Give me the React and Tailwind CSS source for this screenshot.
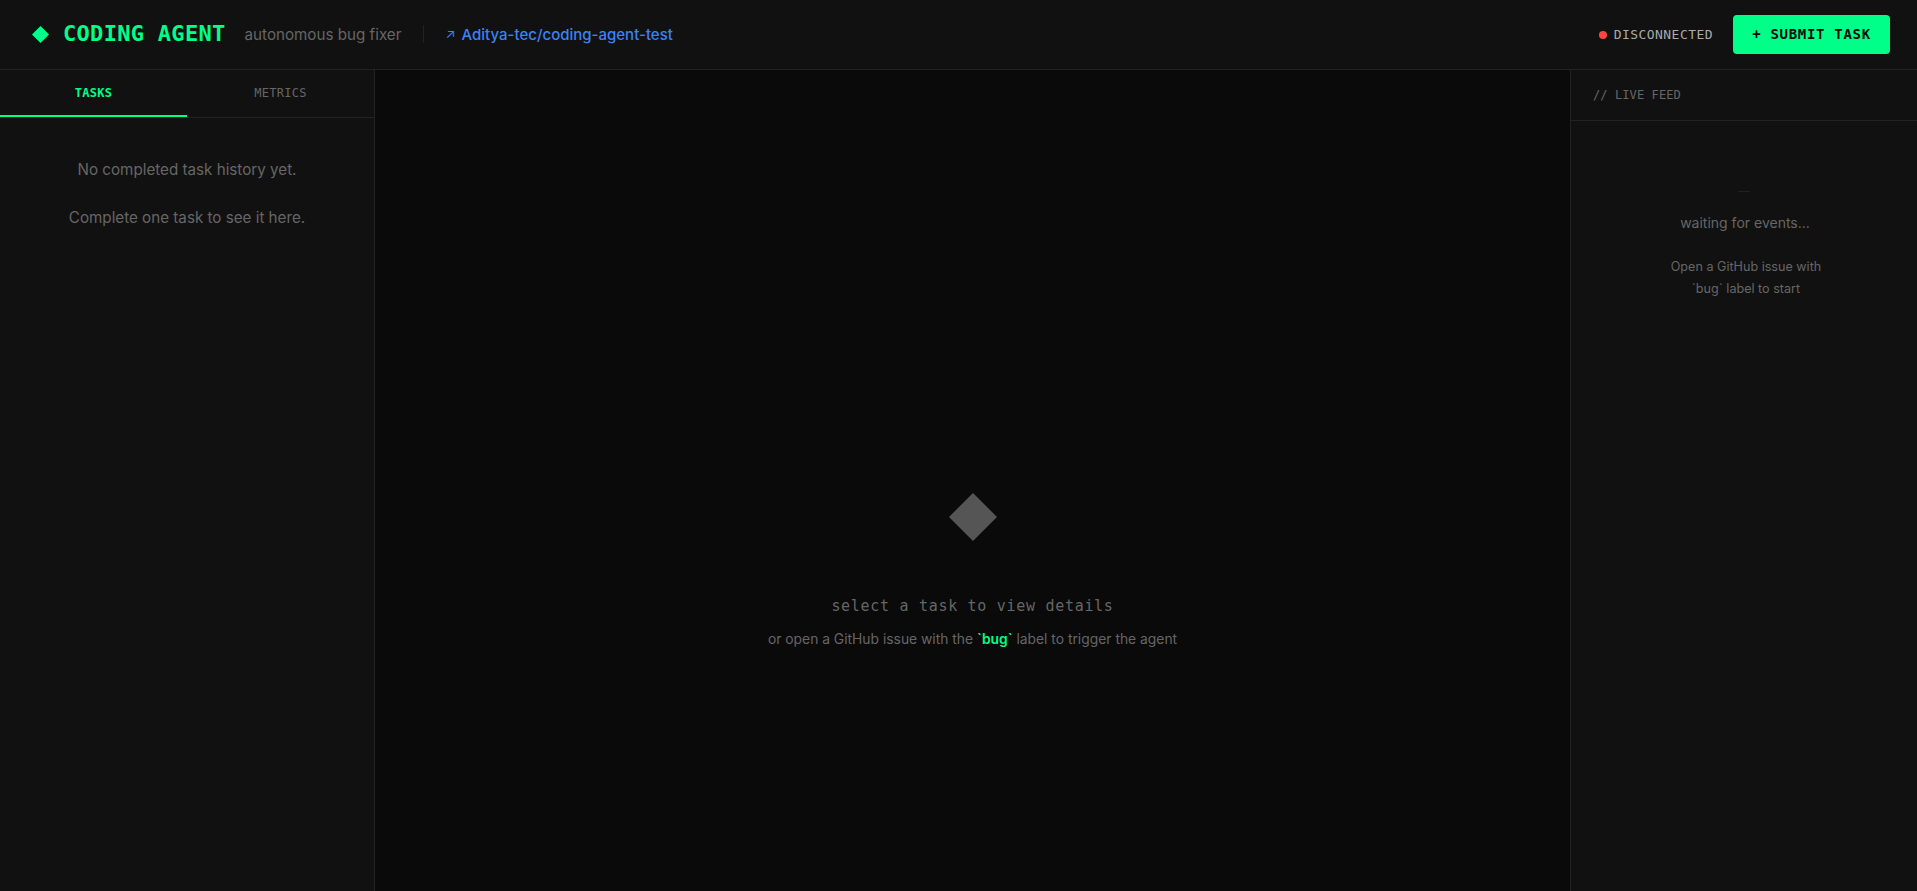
export default function App() {
  return (
    <div className="flex h-[891px] w-full flex-col overflow-hidden bg-[#0a0a0a] font-['Inter',sans-serif] text-[#666]">
      <header className="flex h-[70px] shrink-0 items-center justify-between border-b border-[#222] bg-[#111] pl-8 pr-[27px]">
        <div className="flex items-center">
          <svg width="17" height="17" viewBox="0 0 17 17" className="mr-[14px]"><path d="M8.5 0L17 8.5L8.5 17L0 8.5Z" fill="#00ff88" /></svg>
          <span className="font-['DejaVu_Sans_Mono',monospace] text-[22px] font-bold leading-none tracking-[0.3px] text-[#00ff88]">CODING AGENT</span>
          <span className="ml-[19px] pt-px text-[15.2px] text-[#666]">autonomous bug fixer</span>
          <span className="ml-[22px] h-[18px] w-px bg-[#222]" />
          <span className="ml-[21px] flex items-center pt-px text-[15px] font-medium text-[#3b82f6]"><span className="mr-[6px] text-[13px] font-normal">↗</span>Aditya-tec/coding-agent-test</span>
        </div>
        <div className="flex items-center">
          <span className="h-2 w-2 rounded-full bg-[#ff4444]" />
          <span className="ml-[7px] font-['DejaVu_Sans_Mono',monospace] text-[13px] font-medium tracking-[0.45px] text-[#aaa]">DISCONNECTED</span>
          <button className="ml-5 flex h-[39px] w-[157px] items-center justify-center rounded-[4px] bg-[#00ff88] font-['DejaVu_Sans_Mono',monospace] text-[14px] font-bold tracking-[0.7px] text-[#0a0a0a]">+ SUBMIT TASK</button>
        </div>
      </header>
      <div className="flex min-h-0 flex-1">
        <aside className="flex w-[375px] shrink-0 flex-col border-r border-[#222] bg-[#111]">
          <div className="flex h-[48px] border-b border-[#222]">
            <div className="flex flex-1 items-center justify-center border-b-2 border-[#00ff88] font-['DejaVu_Sans_Mono',monospace] text-[12px] font-bold tracking-[0.3px] text-[#00ff88]">TASKS</div>
            <div className="flex flex-1 items-center justify-center pb-[2px] font-['DejaVu_Sans_Mono',monospace] text-[12px] tracking-[0.3px] text-[#666]">METRICS</div>
          </div>
          <div className="pt-[40px] text-center text-[15.2px] leading-[24px] text-[#666]">
            <p>No completed task history yet.</p>
            <p className="mt-6">Complete one task to see it here.</p>
          </div>
        </aside>
        <main className="flex min-w-0 flex-1 flex-col items-center bg-[#0a0a0a] pt-[423px]">
          <svg width="48" height="48" viewBox="0 0 48 48"><path d="M24 0L48 24L24 48L0 24Z" fill="#555" /></svg>
          <p className="mt-[54px] font-['DejaVu_Sans_Mono',monospace] text-[15px] tracking-[0.7px] text-[#666]">select a task to view details</p>
          <p className="mt-[11px] text-[13.85px] text-[#666]">or open a GitHub issue with the <span className="font-semibold text-[#00ff88]">`bug`</span> label to trigger the agent</p>
        </main>
        <aside className="flex w-[347px] shrink-0 flex-col border-l border-[#222] bg-[#111]">
          <div className="flex h-[51px] items-center border-b border-[#222] px-[22px] font-['DejaVu_Sans_Mono',monospace] text-[12px] tracking-[0.1px] text-[#666]">// LIVE FEED</div>
          <div className="flex flex-col items-center pt-[70px] text-center">
            <div className="h-px w-3 bg-[#222]" />
            <p className="mt-[20px] pl-[2px] text-[14px] text-[#666]">waiting for events...</p>
            <p className="mt-[23px] pl-[4px] text-[12.6px] leading-[22px] text-[#666]">Open a GitHub issue with<br />`bug` label to start</p>
          </div>
        </aside>
      </div>
    </div>
  );
}
